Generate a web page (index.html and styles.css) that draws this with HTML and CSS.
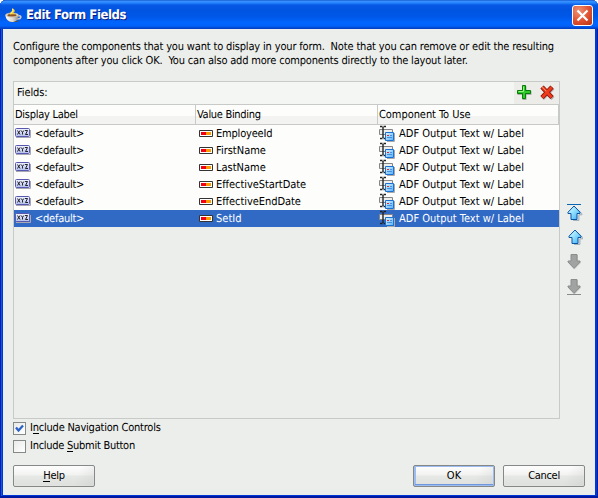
FILE: index.html
```html
<!DOCTYPE html>
<html lang="en">
<head>
<meta charset="utf-8">
<title>Edit Form Fields</title>
<link rel="stylesheet" href="styles.css">
</head>
<body>
<svg class="defs" width="0" height="0">
  <defs>
    <linearGradient id="blue" x1="0" y1="0" x2="1" y2="1"><stop offset="0" stop-color="#e2ffff"/><stop offset=".5" stop-color="#8bdcff"/><stop offset="1" stop-color="#35a8f5"/></linearGradient>
    <linearGradient id="badge" x1="0" y1="0" x2="0" y2="1"><stop offset="0" stop-color="#f0f3ff"/><stop offset="1" stop-color="#b4c0ee"/></linearGradient>
    <linearGradient id="page" x1="0" y1="0" x2="1" y2="1"><stop offset="0" stop-color="#d8f5ff"/><stop offset="1" stop-color="#58b0fa"/></linearGradient>
    <linearGradient id="cup" x1="0" y1="0" x2="1" y2="0"><stop offset="0" stop-color="#fff"/><stop offset=".55" stop-color="#ddd9d2"/><stop offset="1" stop-color="#918c89"/></linearGradient>
  </defs>
  <symbol id="xyz" viewBox="0 0 16 10">
    <path d="M1 9.500h14.500V2" fill="none" stroke="#a8a8b4"/>
    <rect x=".5" y=".5" width="14" height="8" rx="1" fill="url(#badge)" stroke="#5858ad"/>
    <path d="M2.500 2.500l2.500 4M5 2.500l-2.500 4M6.200 2.500l1.300 2 1.300-2M7.500 4.500v2M10 2.500h2.500l-2 4h2.500" fill="none" stroke="#111" stroke-width=".9"/>
  </symbol>
  <symbol id="bind" viewBox="0 0 14 7">
    <path d="M.5.5h13v6H.5z" fill="#fff" stroke="#333"/><path d="M2 2h5v3H2z" fill="#f00010"/><path d="M7 2h5v3H7z" fill="#ff9a00"/>
  </symbol>
  <symbol id="comp" viewBox="0 0 16 17">
    <path d="M.5 4.500h13v5H.5z" fill="#eee" stroke="#858585"/>
    <path d="M1 1.500h2.500M4.500 1.500H7M4 2v11M1 13.500h2.500M4.500 13.500H7" fill="none" stroke="#222" stroke-width="1.400"/>
    <path d="M8 16.500h7.500V8" fill="none" stroke="#aaa"/>
    <path d="M6.500 7.500h8v8h-8z" fill="url(#page)" stroke="#1c70cf"/>
    <path d="M8 10.500h2" stroke="#f02020" stroke-width="1.200"/><path d="M11 10.500h2M8 12.500h5" stroke="#3b88e0" stroke-width=".9"/>
  </symbol>
  <symbol id="arrow" viewBox="0 0 16 16">
    <path d="M8 2l6.300 6v1.200h-3v5.600H5.500" fill="none" stroke="#9aa9b5" transform="translate(.6 .6)"/>
    <path d="M7 1l6 6.200v1.300h-3v6H4v-6H1V7.200z" fill="url(#blue)" stroke="#0a55a5"/>
  </symbol>
  <symbol id="garrow" viewBox="0 0 16 16">
    <path d="M5 1h6v6.500h3v1.300L7.500 15.500 1.500 9h3z" fill="#c8cac8"/>
    <path d="M4 .5h6v6.500h3v1l-6 6.300L1 8V7h3z" fill="#a1a3a2" stroke="#8b8e8c"/>
  </symbol>
</svg>
<div class="window">
  <header class="titlebar">
    <svg class="cup" width="17" height="17" viewBox="0 0 17 17">
      <path d="M4 14.500h8l2-1" fill="none" stroke="#55504c"/>
      <path d="M13 9c4-1 4 3-1 3" fill="none" stroke="#d3ccc5" stroke-width="1.500"/>
      <path d="M.5 8h13c0 5-3 7-6.500 7S.5 12 .5 8z" fill="url(#cup)"/>
      <ellipse cx="7" cy="8" rx="6.500" ry="2" fill="#e8e1d6" stroke="#bdb6ae" stroke-width=".6"/>
      <ellipse cx="7" cy="8.200" rx="4.700" ry="1.200" fill="#8d5420"/>
      <path d="M5 7.500c-1-3 4-2 2-6.500 4 2 3 4 1 5l3 1z" fill="#ffd22e"/>
      <path d="M6 6.500C7 4 8 5 7.500 2" fill="none" stroke="#fff3a0"/>
    </svg>
    <h1>Edit Form Fields</h1>
    <button class="close" aria-label="Close"><svg width="19" height="19" viewBox="0 0 19 19"><path d="M4.500 4.500l10 10M14.500 4.500l-10 10" stroke="#fff" stroke-width="2.200"/></svg></button>
  </header>
  <main>
    <p class="intro"><span class="l1">Configure the components that you want to display in your form.&nbsp; Note that you can remove or edit the resulting</span><br><span class="l2">components after you click OK.&nbsp; You can also add more components directly to the layout later.</span></p>
    <div class="middle">
      <section class="panel">
        <div class="bar"><span class="fl">Fields:</span>
          <div class="tools">
            <svg width="16" height="16" viewBox="0 0 16 16"><path d="M6.500 2h4v5h5v4h-5v5h-4v-5h-5V7h5z" fill="#a8afa8"/><path d="M6.500 1.500h3v5h5v3h-5v5h-3v-5h-5v-3h5z" fill="#2fca2b" stroke="#087b08"/><path d="M7.500 2.500v5h-5" fill="none" stroke="#95f580"/></svg>
            <svg width="16" height="16" viewBox="0 0 16 16"><path d="M3.500 4l10.500 10.500M14 4L3.500 14.500" stroke="#b3aaa7" stroke-width="4"/><path d="M3 3l10 10.500M13 3L3 13.500" stroke="#8c1408" stroke-width="4.600"/><path d="M3.300 3.300l9.400 9.900M12.700 3.300l-9.400 9.900" stroke="#ee3b1b" stroke-width="2.900"/><path d="M3.300 3l4 4.200" stroke="#ff9777"/></svg>
          </div>
        </div>
        <div class="row head"><span class="h1">Display Label</span><span class="h2">Value Binding</span><span class="h3">Component To Use</span></div>
        <div class="row"><span><svg class="ix"><use href="#xyz"/></svg><b class="d">&lt;default&gt;</b></span><span><svg class="ib"><use href="#bind"/></svg><b class="e1">EmployeeId</b></span><span><svg class="ic"><use href="#comp"/></svg><b class="a">ADF Output Text w/ Label</b></span></div>
        <div class="row"><span><svg class="ix"><use href="#xyz"/></svg><b class="d">&lt;default&gt;</b></span><span><svg class="ib"><use href="#bind"/></svg><b>FirstName</b></span><span><svg class="ic"><use href="#comp"/></svg><b class="a">ADF Output Text w/ Label</b></span></div>
        <div class="row"><span><svg class="ix"><use href="#xyz"/></svg><b class="d">&lt;default&gt;</b></span><span><svg class="ib"><use href="#bind"/></svg><b>LastName</b></span><span><svg class="ic"><use href="#comp"/></svg><b class="a">ADF Output Text w/ Label</b></span></div>
        <div class="row"><span><svg class="ix"><use href="#xyz"/></svg><b class="d">&lt;default&gt;</b></span><span><svg class="ib"><use href="#bind"/></svg><b class="e4">EffectiveStartDate</b></span><span><svg class="ic"><use href="#comp"/></svg><b class="a">ADF Output Text w/ Label</b></span></div>
        <div class="row"><span><svg class="ix"><use href="#xyz"/></svg><b class="d">&lt;default&gt;</b></span><span><svg class="ib"><use href="#bind"/></svg><b class="e4">EffectiveEndDate</b></span><span><svg class="ic"><use href="#comp"/></svg><b class="a">ADF Output Text w/ Label</b></span></div>
        <div class="row sel"><span><svg class="ix"><use href="#xyz"/></svg><b class="d">&lt;default&gt;</b></span><span><svg class="ib"><use href="#bind"/></svg><b>SetId</b></span><span><svg class="ic"><use href="#comp"/></svg><b class="a">ADF Output Text w/ Label</b></span></div>
      </section>
      <nav class="order">
        <svg width="16" height="17" viewBox="0 0 16 17"><use href="#arrow" y="1" width="16" height="16"/><path d="M0 .5h14" stroke="#0a65b5"/></svg>
        <svg width="16" height="17" viewBox="0 0 16 17"><use href="#arrow" x="1" width="16" height="16"/></svg>
        <svg width="16" height="17" viewBox="0 0 16 17"><use href="#garrow" width="16" height="16"/></svg>
        <svg width="16" height="17" viewBox="0 0 16 17"><use href="#garrow" width="16" height="16"/><path d="M0 15.500h14" stroke="#888b89"/></svg>
      </nav>
    </div>
    <label class="check"><i class="box"><svg width="11" height="11" viewBox="0 0 11 11"><path d="M2 4.500l2.500 3L9 2.500" fill="none" stroke="#2c62c8" stroke-width="2.300"/></svg></i><span class="c1">I<u>n</u>clude Navigation Controls</span></label>
    <label class="check"><i class="box"></i><span class="c2">Include <u>S</u>ubmit Button</span></label>
    <footer>
      <button class="btn"><span class="b1"><u>H</u>elp</span></button>
      <button class="btn ok"><span>OK</span></button>
      <button class="btn"><span class="b3">Cancel</span></button>
    </footer>
  </main>
</div>
</body>
</html>
```
FILE: styles.css
```css
* { box-sizing: border-box; }
body { margin: 0; font: 11px/14px "DejaVu Sans Condensed", "DejaVu Sans", sans-serif; font-stretch: condensed; color: #000; background: #fff; text-rendering: geometricPrecision; }
.defs { position: absolute; }
svg { display: block; flex: none; }
b { font-weight: normal; }
u { text-decoration: none; border-bottom: 1px solid currentColor; display: inline-block; height: 13px; line-height: 14px; }
span { white-space: nowrap; }
.l1 { letter-spacing: -.162px; }
.l2 { letter-spacing: -.178px; }
.c1 { letter-spacing: -.22px; }
.c2 { letter-spacing: -.27px; }
.h1 { letter-spacing: -.27px; }
.h2 { letter-spacing: -.3px; }
.h3 { letter-spacing: -.06px; }
.d { letter-spacing: -.25px; }
.e1 { letter-spacing: -.2px; }
.e4 { letter-spacing: -.06px; }
.b1, .b3 { letter-spacing: -.3px; }
.fl { letter-spacing: -.1px; }
.window { width: 598px; height: 498px; background: #0038d8; border-radius: 6px 6px 0 0; overflow: hidden; padding: 0 3px 3px; box-shadow: inset 1px 0 #001ea0, inset -1px 0 #001ea0, inset 0 -2px #0019a0, inset 2px 0 #1055ee; }
.titlebar { height: 29px; margin: 0 -3px; padding: 2px 5px 0 5px; display: flex; align-items: center; background: linear-gradient(#0a48c0 0, #3c94ff 1px, #2482fc 3px, #0859e5 5px, #0054e0 10px, #0058e9 17px, #0066ff 23px, #0062f8 26px, #0046d0 28px, #003dc0 29px); }
.cup { margin-top: -1px; }
h1 { margin: 0 auto 0 4px; color: #fff; font: bold 13px/18px "DejaVu Sans Condensed", "DejaVu Sans", sans-serif; font-stretch: condensed; letter-spacing: -.42px; text-shadow: 1px 1px #0a1c80; }
.close { width: 21px; height: 21px; padding: 0; border: 1px solid #fff; border-radius: 3px; background: radial-gradient(circle at 30% 25%, #ef9273, #df5030 55%, #b83310); }
main { height: 466px; padding: 11px 10px 0; background: #eceeeb; }
.intro { margin: 0; height: 41px; }
.middle { display: flex; height: 338px; }
.panel { width: 547px; border: 1px solid #c7cac7; }
.bar { height: 23px; display: flex; align-items: center; justify-content: space-between; padding-left: 3px; background: #f4f6f3; border-bottom: 1px solid #c7cac7; }
.tools { width: 45px; height: 22px; display: flex; gap: 7px; padding: 2px 0 0 2px; background: #ecede9; }
.row { display: grid; grid-template-columns: 182px 182px 181px; height: 17px; background: #fdfefc; }
.row > span { display: flex; align-items: center; }
.head { height: 20px; border-bottom: 1px solid #c7cac7; background: linear-gradient(#fdfefc 0 11px, #f3f4f1 11px); }
.head > span { border-right: 1px solid #c7cac7; padding: 0 0 0 1px; }
.sel { background: #316ac5; color: #fff; }
.ix { width: 16px; height: 10px; margin: -1px 4px 0 1px; }
.ib { width: 14px; height: 7px; margin: 0 3px 0 3px; }
.ic { width: 16px; height: 17px; margin: 0 4px 0 1px; }
.order { display: grid; grid-auto-rows: 17px; gap: 8px; padding: 123px 0 0 7px; align-content: start; }
.check { display: flex; align-items: center; height: 18px; gap: 4px; }
.box { width: 13px; height: 13px; border: 1px solid #858987; background: linear-gradient(135deg, #e9ebe8, #fff); }
footer { display: flex; gap: 8px; margin-top: 10px; }
.btn { width: 82px; height: 22px; padding: 0; border: 1px solid #858887; border-radius: 2px; font: inherit; color: #000; background: linear-gradient(115deg, transparent 75%, #c8cac866), linear-gradient(#fdfdfd 0, #f2f3f1 45%, #e6e8e5 50%, #dee0dd); box-shadow: inset 0 0 1px #fff; }
.ok { margin-left: auto; box-shadow: inset 0 0 0 1px #9dbdf1, inset 0 -2px #6f97db, inset 2px 0 #9dbdf1; }
```
